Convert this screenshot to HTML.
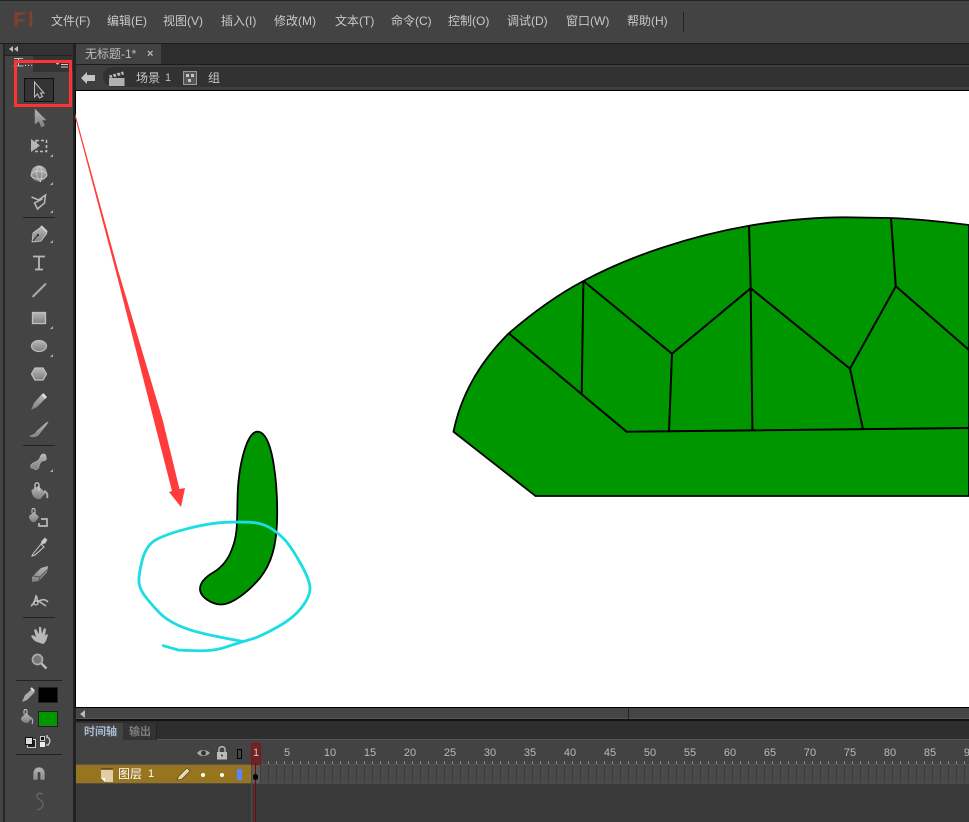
<!DOCTYPE html>
<html><head><meta charset="utf-8"><style>
html,body{margin:0;padding:0;width:969px;height:822px;overflow:hidden;background:#434343}
body{position:relative;font-family:"Liberation Sans","Noto Sans CJK SC",sans-serif;font-size:12px;color:#c8c8c8}
.a{position:absolute}
.m{position:absolute;top:13px;line-height:16px;white-space:nowrap;color:#c6cacc}
.n{position:absolute;top:747px;width:30px;margin-left:-15px;text-align:center;font-size:11px;line-height:13px;color:#b4bcc4}
</style></head><body>
<!-- top bar -->
<div class="a" style="left:0;top:0;width:969px;height:1px;background:#222"></div>
<div class="a" style="left:0;top:1px;width:969px;height:42px;background:#434343"></div>
<div class="a" style="left:0;top:43px;width:969px;height:1px;background:#1e1e1e"></div>
<div class="a" style="left:13px;top:8px;font-size:21px;line-height:26px;font-weight:bold;color:#84402f;letter-spacing:2px">Fl</div>
<div class="m" style="left:51px">文件(F)</div><div class="m" style="left:107px">编辑(E)</div><div class="m" style="left:163px">视图(V)</div><div class="m" style="left:221px">插入(I)</div><div class="m" style="left:274px">修改(M)</div><div class="m" style="left:335px">文本(T)</div><div class="m" style="left:391px">命令(C)</div><div class="m" style="left:448px">控制(O)</div><div class="m" style="left:507px">调试(D)</div><div class="m" style="left:566px">窗口(W)</div><div class="m" style="left:627px">帮助(H)</div>
<div class="a" style="left:683px;top:12px;width:1px;height:20px;background:#222"></div>
<!-- document tabs -->
<div class="a" style="left:75px;top:44px;width:894px;height:21px;background:#2d2d2d"></div>
<div class="a" style="left:76px;top:44px;width:85px;height:20px;background:#434343"></div>
<div class="a" style="left:85px;top:46px;line-height:16px;font-size:12px;color:#bdbdbd">无标题-1*</div>
<div class="a" style="left:147px;top:46px;line-height:16px;font-size:11px;font-weight:bold;color:#bbb">×</div>
<div class="a" style="left:75px;top:64px;width:894px;height:1px;background:#1c1c1c"></div>
<!-- edit bar -->
<div class="a" style="left:75px;top:65px;width:894px;height:26px;background:#3f3f3f"></div>
<div class="a" style="left:103px;top:67px;width:866px;height:20px;border-radius:10px 0 0 10px;background:#323232"></div>
<svg class="a" style="left:81px;top:72px" width="14" height="12"><path d="M0 6L6 0V3H14V9H6V12Z" fill="#c4c4c4"/></svg>
<svg class="a" style="left:109px;top:71px" width="16" height="15"><path d="M0 4.500L14 0.500l1 3L1 7Z" fill="#bdbdbd"/><path d="M0 7H15.500V15H0Z" fill="#b0b0b0"/><path d="M3 3.500l1.500 3M7 2.500l1.500 3M11 1.300l1.500 3" stroke="#333" stroke-width="1.400"/></svg>
<div class="a" style="left:136px;top:70px;line-height:16px;color:#c8c8c8">场景</div>
<div class="a" style="left:165px;top:70px;line-height:16px;font-size:11px;color:#b8c0c8">1</div>
<svg class="a" style="left:183px;top:71px" width="14" height="14"><rect x=".5" y=".5" width="13" height="13" fill="#555" stroke="#999"/><path d="M3 3h3v3H3zM8 3h3v3H8zM5 8h3v3H5z" fill="#c4c4c4"/></svg>
<div class="a" style="left:208px;top:70px;line-height:16px;color:#c8c8c8">组</div>
<!-- left panel -->
<div class="a" style="left:3px;top:44px;width:2px;height:778px;background:#262626"></div>
<div class="a" style="left:5px;top:44px;width:69px;height:778px;background:#444"></div>
<div class="a" style="left:73px;top:44px;width:3px;height:778px;background:#222"></div>
<div class="a" style="left:5px;top:44px;width:68px;height:11px;background:#333"></div>
<svg class="a" style="left:9px;top:46px" width="9" height="7"><path d="M4 0v6L0 3zM9 0v6L5 3z" fill="#bbb"/></svg>
<div class="a" style="left:33px;top:55px;width:40px;height:17px;background:#333"></div>
<div class="a" style="left:5px;top:55px;width:68px;height:1px;background:#222"></div>
<div class="a" style="left:13px;top:56px;line-height:14px;font-size:11px;color:#ccc">工...</div>
<svg class="a" style="left:54px;top:60px" width="15" height="9"><path d="M1 2h5L3.500 5z" fill="#ccc"/><path d="M7 2h7M7 4.500h7M7 7h7" stroke="#ccc"/></svg>
<div class="a" style="left:24px;top:78px;width:28px;height:22px;background:#333;border:1px solid #111"></div>
<!-- tool icons -->
<svg class="a" style="left:5px;top:75px" width="68" height="747" viewBox="5 75 68 747">
<defs><linearGradient id="g" x1="0" y1="0" x2="0" y2="1"><stop offset="0" stop-color="#b8b8b8"/><stop offset="1" stop-color="#7e7e7e"/></linearGradient></defs>
<path d="M34.500 82V97l3-3 2 4 3-1.500-2-3.500H44Z" fill="#3a3a3a" stroke="#c0c0c0"/>
<path d="M35 109V124l4-3 2.500 6 3-1.500-2.500-5.500H46Z" fill="url(#g)" stroke="#999" stroke-width=".5"/>
<path d="M31 139l9 6.500-9 6.500Z" fill="#b4b4b4"/><path d="M36 140.500H46.500V151.500H36Z" fill="none" stroke="#bbb" stroke-dasharray="3 2" stroke-width="1.600"/>
<circle cx="39" cy="173.500" r="8" fill="url(#g)"/><ellipse cx="39" cy="175" rx="8" ry="4" fill="none" stroke="#ddd" stroke-width=".8"/><path d="M39 166c-4 4-3 12 2 16M39 166c4 3 4 10 1 16" fill="none" stroke="#d0d0d0" stroke-width=".8"/>
<path d="M31.500 197l7 3 7-5-1 8-7 6-3-6 8-4" fill="none" stroke="#b8b8b8" stroke-width="1.500"/>
<path d="M32 242l1-9 8-6 6 6-6 8Z" fill="url(#g)" stroke="#ccc" stroke-width=".8"/><path d="M33 241l5-6" stroke="#333"/><circle cx="38" cy="235" r="1" fill="#222"/><path d="M41 226l6 6" stroke="#ccc" stroke-width="2.200"/>
<path d="M33 256.500H45M39 256.500V269M35 269.500H43" stroke="#b8b8b8" stroke-width="1.800" fill="none"/>
<path d="M32.500 297L46 283.500" stroke="#a8a8a8" stroke-width="2"/>
<rect x="32.500" y="312.500" width="13" height="11" fill="url(#g)" stroke="#c0c0c0" stroke-width="1.300"/>
<ellipse cx="39" cy="346" rx="7.500" ry="5.500" fill="url(#g)" stroke="#bbb" stroke-width="1.200"/>
<path d="M35 368H43L46.500 374 43 380H35L31.500 374Z" fill="url(#g)" stroke="#c0c0c0" stroke-width="1.300"/>
<path d="M31 410l3-7 8-9 4 4-9 9Z" fill="url(#g)"/><path d="M42.500 394l3.500 4" stroke="#ddd" stroke-width="2.800"/>
<path d="M30 436c3-1 6-2 7-5l9-8 2-1-1 2-8 10c-2 3-6 3-9 2Z" fill="url(#g)" stroke="#aaa" stroke-width=".6"/>
<path d="M41 455c2-2 5-1 5 1 0 2 1 3 0 4-2 1-3 1-4 1-2 2-3 4-3 6-1 3-4 3-5 2-1-1-2-1-3-1-1-2 0-4 2-5 2-1 5-2 6-4 1-1 1-2 2-4Z" fill="url(#g)" stroke="#c8c8c8" stroke-width=".5"/>
<path d="M31.500 490l7-4 7 7-5 6c-5 1-9-3-9-9Z" fill="url(#g)"/><path d="M35 489v-4c0-3 4-3 4 0v6" fill="none" stroke="#ccc" stroke-width="1.300"/><path d="M44 491c3 1 4 4 3 7" stroke="#aaa" stroke-width="2" fill="none"/>
<path d="M29 516l5-4 5 5-4 5c-3 1-6-2-6-6Z" fill="url(#g)"/><path d="M32 513v-3c0-2 3-2 3 0v3" fill="none" stroke="#ccc"/><path d="M41 519h6v7h-8v-3" fill="none" stroke="#bbb" stroke-width="1.700"/>
<path d="M33 554l8-10 3 3-9 8-3 1Z" fill="#444" stroke="#ccc"/><path d="M41 544l1-3 3-3 2 2-2 3-3 1Z" fill="#ccc" stroke="#bbb" stroke-width=".8"/>
<path d="M32 577l9-9 7-2-1 6-8 9-7 1Z" fill="url(#g)"/><path d="M33 576l7 1 7-7M40 577l-1 4" stroke="#555" fill="none"/>
<path d="M31 606c3-2 4-6 5-10 2 2 1 5 1 7 3-3 7-5 11-1M37 600l9 6" fill="none" stroke="#b8b8b8" stroke-width="1.600"/><circle cx="36" cy="603" r="2" fill="#444" stroke="#ddd"/>
<path d="M37 642c-3-1-5-4-6-6l2-1 3 2-2-7 2-1 3 5v-7h2l1 7 2-6 2 1-1 7 2-2 1 1-2 6c-1 1-2 3-3 3Z" fill="#b8b8b8"/>
<circle cx="37.500" cy="659.500" r="5" fill="#777" stroke="#aaa" stroke-width="1.700"/><path d="M41.500 663.500l5 5" stroke="#bbb" stroke-width="2.400"/>
<path d="M22 702l3-7 7-6 3 3-8 8Z" fill="#aaa"/><path d="M31 688l3 3" stroke="#ddd" stroke-width="2.200"/>
<path d="M21 718l5-5 6 5-4 5c-3 0-7-1-7-5Z" fill="url(#g)"/><path d="M24 714v-3c0-2 3-2 3 0v3" stroke="#ccc" fill="none"/><path d="M31 718c2 1 2 4 1 6" stroke="#aaa" fill="none" stroke-width="1.400"/>
<rect x="27.500" y="739.500" width="8" height="8" fill="#222" stroke="#ccc"/><rect x="25.500" y="737.500" width="7" height="7" fill="#ddd" stroke="#111"/>
<rect x="40.500" y="736.500" width="4" height="4" fill="#111" stroke="#ccc"/><rect x="40" y="742" width="5" height="5" fill="#eee"/><path d="M47 737c3 1 4 5 1 8M46 745h3M47 735v3" stroke="#ccc" fill="none" stroke-width="1.300"/>
<path d="M34 779v-6c0-7 10-7 10 0v6h-3v-6c0-2-4-2-4 0v6Z" fill="url(#g)" stroke="#aaa"/>
<path d="M43 794c-4-2-7 0-6 3s6 3 6 7-3 5-6 6" fill="none" stroke="#666" stroke-width="1.300"/>
<g fill="#aaa"><path d="M53 157v-3l-3 3zM53 185v-3l-3 3zM53 213v-3l-3 3zM53 243v-3l-3 3zM53 329v-3l-3 3zM53 357v-3l-3 3zM53 472v-3l-3 3z"/></g>
<g stroke="#222"><path d="M23 217.500H55M23 445.500H55M23 617.500H55M16 680.500H62M16 754.500H62"/></g>
</svg>
<div class="a" style="left:38px;top:687px;width:18px;height:14px;background:#000;border:1px solid #222"></div>
<div class="a" style="left:38px;top:711px;width:18px;height:14px;background:#009600;border:1px solid #222"></div>
<!-- stage -->
<div class="a" style="left:75px;top:90px;width:894px;height:618px;background:#000"></div>
<svg class="a" style="left:0;top:0" width="969" height="822" viewBox="0 0 969 822">
<rect x="76" y="91" width="893" height="616" fill="#fff"/>
<path d="M453.500 431.700C463 385 490 352 508.800 333.300C530 315 555 296 583.400 281C630 256 690 236 749 225.700C790 219 820 217.300 844.900 217.300L891 218C920 219 945 222 969 225V496H535.500Z" fill="#009600" stroke="#000" stroke-width="1.800"/>
<path d="M583.400 281L581.700 394M508.800 333.300L626.600 431.700L969 428M583.400 281L672 353.700L669 431.700M672 353.700L750.700 288.300L749 225.700M750.700 288.300L752.400 430.300M750.700 288.300L850 368.700L863 429.300M850 368.700L895.800 286.300L891 218M895.800 286.300L969 350" fill="none" stroke="#000" stroke-width="2"/>
<path d="M257.300 431.700C247 431.700 238 465 237.500 500C237 525 237.500 535 232 549C228 560 222 567 214 572C207 576 200 582 200 589C200 597 212 604.500 221 604.500C232 604.500 248 592 260 578C272 563 276 545 277 523C278 490 274 431.700 257.300 431.700Z" fill="#009600" stroke="#000" stroke-width="1.800"/>
<path d="M163.300 645.700L178.300 650Q195 651 205.800 650.600Q216.700 650.300 225.800 647.100Q235 644 240 642.500Q245 641 252.500 638.800Q260 636.700 276.600 627.500Q293.300 618.300 301.600 607.500Q310 596.700 310 588.300Q310 580 300 562.500Q290 545 283.300 538.300Q276.700 531.700 270 527.800Q263.300 524 255 522.800Q246.700 521.700 228.300 522.200Q210 522.700 185 529.300Q160 536 152.500 542.100Q145 548.300 141.600 562.500Q138.300 576.700 139.100 583.300Q140 590 146.600 598.300Q153.300 606.700 160 613.300Q166.700 620 177.500 625Q188.300 630 202.500 633.300Q216.700 636.700 241.700 641.300" fill="none" stroke="#1bdde2" stroke-width="2.800" stroke-linejoin="round" stroke-linecap="round"/>
<path d="M75 113L118 270L162.700 420L179.500 489L185 488L181 507L169 492L172 491L154.300 422L115.500 270L75 117Z" fill="#ff3b3b"/>
<rect x="15.500" y="61.500" width="55" height="44" fill="none" stroke="#ff3333" stroke-width="3"/>
</svg>
<!-- scrollbar -->
<div class="a" style="left:76px;top:708px;width:893px;height:11px;background:#454545"></div>
<div class="a" style="left:76px;top:718px;width:893px;height:1px;background:#585858"></div>
<svg class="a" style="left:80px;top:710px" width="7" height="8"><path d="M5 0v8L0 4Z" fill="#bbb"/></svg>
<div class="a" style="left:628px;top:708px;width:1px;height:11px;background:#222"></div>
<div class="a" style="left:76px;top:719px;width:893px;height:2px;background:#111"></div>
<!-- timeline tabs -->
<div class="a" style="left:76px;top:721px;width:893px;height:19px;background:#2e2e2e"></div>
<div class="a" style="left:76px;top:723px;width:47px;height:18px;background:#434343"></div>
<div class="a" style="left:123px;top:723px;width:34px;height:17px;background:#333;border-right:1px solid #222;box-sizing:border-box"></div>
<div class="a" style="left:84px;top:724px;line-height:16px;font-size:11px;color:#a8bccf;font-weight:bold">时间轴</div>
<div class="a" style="left:129px;top:724px;line-height:16px;font-size:11px;color:#7c7c7c;font-weight:bold">输出</div>
<div class="a" style="left:76px;top:740px;width:893px;height:25px;background:#434343"></div>
<div class="a" style="left:157px;top:739px;width:812px;height:1px;background:#555"></div>
<!-- header icons -->
<svg class="a" style="left:190px;top:740px" width="60" height="24" viewBox="190 740 60 24">
<path d="M197 753c3-4 9-4 13 0-4 4-10 4-13 0Z" fill="#aaa"/><circle cx="203.500" cy="753" r="2.500" fill="#333"/>
<rect x="217" y="752" width="10" height="7.500" fill="#bbb"/><path d="M219 752v-3c0-3 6-3 6 0v3" fill="none" stroke="#bbb" stroke-width="1.400"/><circle cx="222" cy="755.500" r="1" fill="#333"/>
<rect x="237.500" y="749.500" width="4" height="9" fill="none" stroke="#000"/>
</svg>
<!-- numbers -->
<div class="n" style="left:255px">1</div><div class="n" style="left:287px">5</div><div class="n" style="left:330px">10</div><div class="n" style="left:370px">15</div><div class="n" style="left:410px">20</div><div class="n" style="left:450px">25</div><div class="n" style="left:490px">30</div><div class="n" style="left:530px">35</div><div class="n" style="left:570px">40</div><div class="n" style="left:610px">45</div><div class="n" style="left:650px">50</div><div class="n" style="left:690px">55</div><div class="n" style="left:730px">60</div><div class="n" style="left:770px">65</div><div class="n" style="left:810px">70</div><div class="n" style="left:850px">75</div><div class="n" style="left:890px">80</div><div class="n" style="left:930px">85</div><div class="n" style="left:970px">90</div>
<div class="a" style="left:260px;top:761px;width:709px;height:3px;background:repeating-linear-gradient(90deg,#8c8c8c 0,#8c8c8c 1px,transparent 1px,transparent 8px)"></div>
<!-- layer rows -->
<div class="a" style="left:76px;top:765px;width:893px;height:57px;background:#393939"></div>
<div class="a" style="left:76px;top:765px;width:175px;height:18px;background:#97741e"></div>
<div class="a" style="left:76px;top:783px;width:893px;height:1px;background:#4c4c4c"></div>
<div class="a" style="left:76px;top:764px;width:893px;height:1px;background:#555"></div>
<svg class="a" style="left:100px;top:768px" width="14" height="15"><path d="M1 1H13V14H5L1 10Z" fill="#e0cfa4"/><path d="M1 1H13" stroke="#5a4210" stroke-width="1.500"/><path d="M1 10H5V14Z" fill="#fff"/></svg>
<div class="a" style="left:118px;top:766px;line-height:16px;color:#fff">图层</div>
<div class="a" style="left:148px;top:767px;line-height:15px;font-size:11px;color:#fff">1</div>
<svg class="a" style="left:176px;top:767px" width="15" height="14"><path d="M1 13l2-4 8-8 3 3-8 8Z" fill="#e4d8b8" stroke="#4a3a10" stroke-width=".6"/></svg>
<div class="a" style="left:201px;top:773px;width:4px;height:4px;border-radius:2px;background:#fff"></div>
<div class="a" style="left:220px;top:773px;width:4px;height:4px;border-radius:2px;background:#fff"></div>
<div class="a" style="left:237px;top:769px;width:5px;height:11px;background:#5c84ff"></div>
<!-- frames -->
<div class="a" style="left:252px;top:765px;width:717px;height:18px;background:repeating-linear-gradient(90deg,#3c3c3c 0,#3c3c3c 1px,#4a4a4a 1px,#4a4a4a 8px)"></div>
<div class="a" style="left:252px;top:765px;width:8px;height:18px;background:#5a5a5a"></div>
<div class="a" style="left:251px;top:765px;width:1px;height:57px;background:#4c4c4c"></div>
<div class="a" style="left:251px;top:743px;width:8px;height:20px;background:#6e2424;border:1px solid #8a1414"></div>
<div class="a" style="left:252px;top:747px;width:8px;text-align:center;font-size:11px;line-height:13px;color:#c8c8c8">1</div>
<div class="a" style="left:255px;top:764px;width:1px;height:58px;background:#8a0000"></div>
<div class="a" style="left:253px;top:774px;width:5px;height:6px;border-radius:3px;background:#000"></div>
</body></html>
